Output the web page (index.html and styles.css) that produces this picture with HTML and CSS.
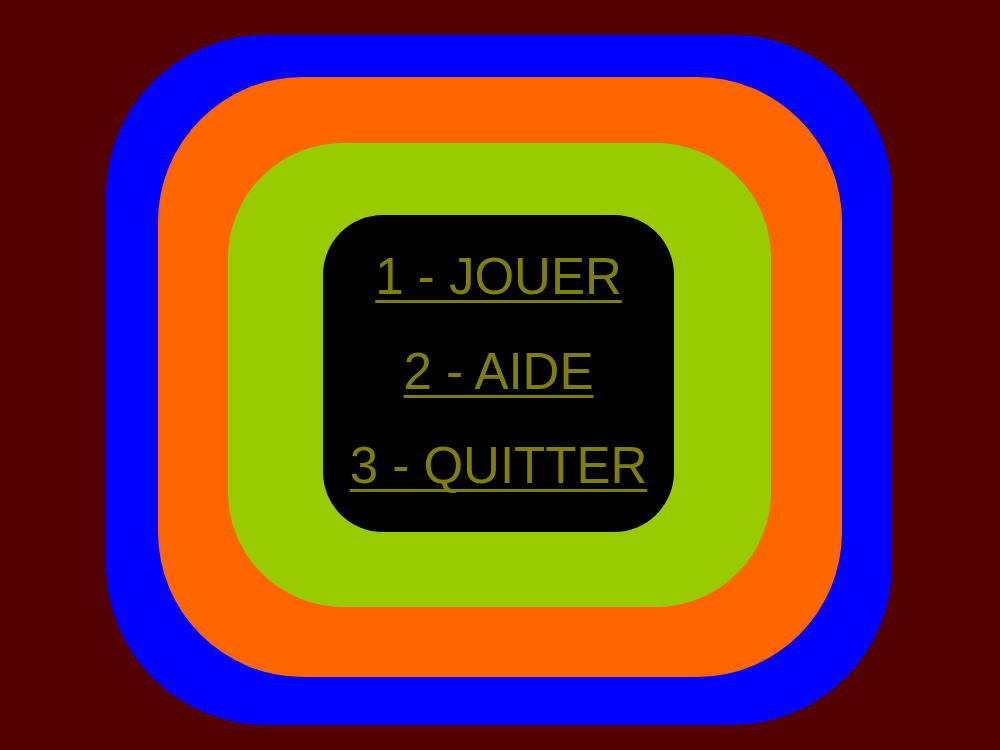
FILE: index.html
```html
<!DOCTYPE html>
<html lang="fr">
<head>
<meta charset="utf-8">
<title>Menu</title>
<link rel="stylesheet" href="styles.css">
</head>
<body>
<div class="ring-blue">
  <div class="ring-orange">
    <div class="ring-green">
      <nav class="menu">
        <a class="item" href="#jouer">1 - JOUER</a>
        <a class="item" href="#aide">2 - AIDE</a>
        <a class="item" href="#quitter">3 - QUITTER</a>
      </nav>
    </div>
  </div>
</div>
</body>
</html>
```

FILE: styles.css
```css
html, body {
  margin: 0;
  padding: 0;
}
body {
  width: 1000px;
  height: 750px;
  background: #520000;
  font-family: "Liberation Sans", Arial, sans-serif;
  overflow: hidden;
  padding-top: 35px;
  padding-left: 106px;
  box-sizing: border-box;
}
.ring-blue {
  width: 786px;
  height: 690px;
  box-sizing: border-box;
  background: #0000ff;
  border-radius: 160px;
  padding: 42px 50px 48px 52px;
}
.ring-orange {
  width: 684px;
  height: 600px;
  box-sizing: border-box;
  background: #ff6600;
  border-radius: 145px;
  padding: 66px 71px 70px 70px;
}
.ring-green {
  width: 543px;
  height: 464px;
  box-sizing: border-box;
  background: #99cc00;
  border-radius: 115px;
  padding: 72px 97px 75px 95px;
}
.menu {
  width: 351px;
  height: 317px;
  box-sizing: border-box;
  background: #000000;
  border-radius: 60px;
  padding-top: 15px;
  display: flex;
  flex-direction: column;
  align-items: center;
}
.item {
  display: block;
  color: #808000;
  font-size: 51px;
  line-height: 94.5px;
  height: 94.5px;
  text-decoration: underline;
  text-decoration-skip-ink: none;
  text-decoration-thickness: 3px;
  text-underline-offset: 6px;
  white-space: nowrap;
}
```
